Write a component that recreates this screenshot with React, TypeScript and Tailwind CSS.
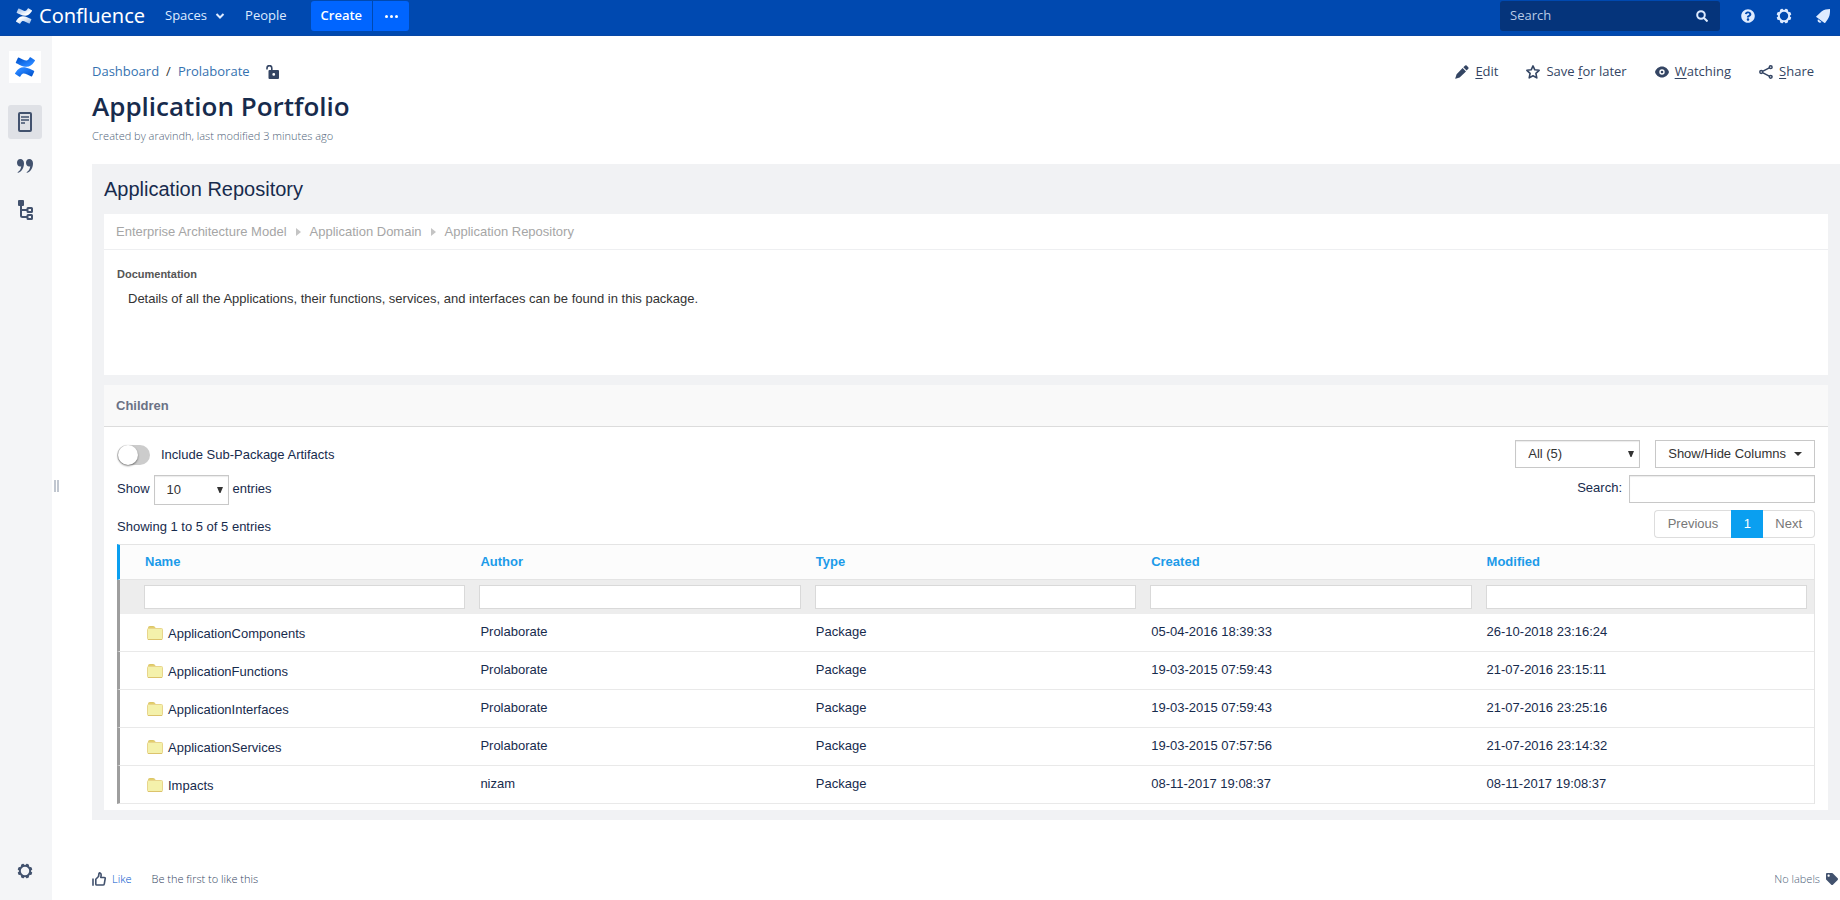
import React, { useState } from "react";
import { FaQuestionCircle, FaTag } from "react-icons/fa";

const UI = "font-['Open_Sans',sans-serif]";

const columns = ["Name", "Author", "Type", "Created", "Modified"];

const packages = [
  { name: "ApplicationComponents", author: "Prolaborate", type: "Package", created: "05-04-2016 18:39:33", modified: "26-10-2018 23:16:24" },
  { name: "ApplicationFunctions", author: "Prolaborate", type: "Package", created: "19-03-2015 07:59:43", modified: "21-07-2016 23:15:11" },
  { name: "ApplicationInterfaces", author: "Prolaborate", type: "Package", created: "19-03-2015 07:59:43", modified: "21-07-2016 23:25:16" },
  { name: "ApplicationServices", author: "Prolaborate", type: "Package", created: "19-03-2015 07:57:56", modified: "21-07-2016 23:14:32" },
  { name: "Impacts", author: "nizam", type: "Package", created: "08-11-2017 19:08:37", modified: "08-11-2017 19:08:37" },
];

function ConfluenceMark({ id, from, to, className }: { id: string; from: string; to: string; className: string }) {
  return (
    <svg viewBox="0 0 24 24" className={className} aria-hidden="true">
      <defs>
        <linearGradient id={id + "-a"} x1="1" y1="1" x2="0.2" y2="0.2">
          <stop offset="0.1" stopColor={from} />
          <stop offset="0.9" stopColor={to} />
        </linearGradient>
        <linearGradient id={id + "-b"} x1="0" y1="0" x2="0.8" y2="0.8">
          <stop offset="0.1" stopColor={from} />
          <stop offset="0.9" stopColor={to} />
        </linearGradient>
      </defs>
      <path
        fill={`url(#${id}-a)`}
        d="M.87 18.257c-.248.382-.53.875-.763 1.245a.764.764 0 0 0 .255 1.04l4.965 3.054a.764.764 0 0 0 1.058-.26c.199-.332.454-.763.733-1.221 1.967-3.247 3.945-2.853 7.508-1.146l4.957 2.337a.764.764 0 0 0 1.028-.382l2.364-5.346a.764.764 0 0 0-.382-1 599.851 599.851 0 0 1-4.965-2.361C10.911 10.97 5.224 11.185.87 18.257z"
      />
      <path
        fill={`url(#${id}-b)`}
        d="M23.131 5.743c.249-.405.531-.875.764-1.25a.764.764 0 0 0-.256-1.034L18.675.404a.764.764 0 0 0-1.058.26c-.195.335-.451.763-.734 1.225-1.966 3.246-3.945 2.85-7.508 1.146L4.437.694a.764.764 0 0 0-1.027.382L1.046 6.422a.764.764 0 0 0 .382 1c1.039.49 3.105 1.467 4.965 2.361 6.698 3.246 12.392 3.029 16.738-4.04z"
      />
    </svg>
  );
}

function Cog({ className }: { className: string }) {
  return (
    <svg viewBox="0 0 16 16" className={className} fill="currentColor" aria-hidden="true">
      <circle cx="8" cy="8" r="5.2" fill="none" stroke="currentColor" strokeWidth="2" />
      {[22.5, 67.5, 112.5, 157.5, 202.5, 247.5, 292.5, 337.5].map((a) => (
        <rect key={a} x="6.4" y="0.6" width="3.2" height="2.6" rx="0.8" transform={`rotate(${a} 8 8)`} />
      ))}
    </svg>
  );
}

function Bell() {
  return (
    <svg viewBox="0 0 14 14" className="size-3.5" fill="currentColor" aria-hidden="true">
      <path d="M.2 7.400L5.500 2.600C8 .600 11 .100 14 0c.1 3.500-.1 7-2.100 10L9.300 13.800c-.2.300-.6.300-.8.100L.3 8.100c-.2-.2-.3-.5-.1-.7z" />
      <path d="M2 10.200l3.600 2.700c-.9 1-2.300 1-3.200.2-.8-.7-1-1.900-.4-2.900z" />
    </svg>
  );
}

function PageIcon() {
  return (
    <svg viewBox="0 0 14 20" className="h-5 w-3.5" fill="none" stroke="currentColor" aria-hidden="true">
      <rect x="1" y="1" width="12" height="18" rx="1" strokeWidth="2" />
      <path d="M3 5h8M3 8h8M3 11h4" strokeWidth="1.500" />
    </svg>
  );
}

function QuotesIcon() {
  return (
    <svg viewBox="0 0 16 14" className="h-3.5 w-4" fill="currentColor" aria-hidden="true">
      <path d="M3.300 0C5.500 0 7 1.600 7 4.300c0 4.500-2.300 8.400-5.800 9.500-.6.200-.8-.5-.3-.8C2.800 11.800 4 9.700 4.200 7.200 2 8 0 6.200 0 3.700 0 1.600 1.400 0 3.300 0z" />
      <path transform="translate(9 0)" d="M3.300 0C5.500 0 7 1.600 7 4.300c0 4.500-2.300 8.400-5.800 9.500-.6.200-.8-.5-.3-.8C2.800 11.800 4 9.700 4.200 7.200 2 8 0 6.200 0 3.700 0 1.600 1.400 0 3.300 0z" />
    </svg>
  );
}

function TreeIcon() {
  return (
    <svg viewBox="0 0 16 20" className="h-5 w-4" fill="none" stroke="currentColor" strokeWidth="2" aria-hidden="true">
      <rect x="1" y="0" width="6" height="6" rx="1" fill="currentColor" stroke="none" />
      <path d="M4 5v10.500q0 1.500 1.500 1.500H10M4 10h6" />
      <rect x="10.500" y="8" width="4.500" height="4" rx="0.500" />
      <rect x="10.500" y="15" width="4.500" height="4" rx="0.500" />
    </svg>
  );
}

function UnlockIcon() {
  return (
    <svg viewBox="0 0 14 14" className="size-3.5" aria-hidden="true">
      <path d="M1 4.500V3a2.300 2.300 0 0 1 4.800 0v3" fill="none" stroke="currentColor" strokeWidth="1.600" />
      <path fillRule="evenodd" fill="currentColor" d="M3.500 5h8.500a1 1 0 0 1 1 1v7a1 1 0 0 1-1 1H3.500a1 1 0 0 1-1-1V6a1 1 0 0 1 1-1zM7.750 8a1.400 1.400 0 1 0 0 2.800 1.400 1.400 0 0 0 0-2.800z" />
    </svg>
  );
}

function PencilIcon() {
  return (
    <svg viewBox="0 0 14 14" className="size-3.5" fill="currentColor" aria-hidden="true">
      <path d="M8.300 2.300L10.200.600q.7-.6 1.400 0l1.700 1.700q.6.700 0 1.400l-1.700 1.900z" />
      <path d="M7.600 3l3.400 3.400-6.400 6L.6 13.700q-.5.1-.3-.4L1.600 9.200z" />
    </svg>
  );
}

function EyeIcon() {
  return (
    <svg viewBox="0 0 14 14" className="size-3.5" aria-hidden="true">
      <path fill="currentColor" fillRule="evenodd" d="M7 1.500c3.400 0 6 2.400 7 5.500-1 3.100-3.600 5.500-7 5.500S1 10.100 0 7c1-3.100 3.600-5.500 7-5.500zM7 4.300a2.700 2.700 0 1 0 0 5.400 2.700 2.700 0 0 0 0-5.400z" />
      <circle cx="7" cy="7" r="1.300" fill="currentColor" />
    </svg>
  );
}

function StarIcon() {
  return (
    <svg viewBox="0 0 14 14" className="size-3.5" fill="none" stroke="currentColor" strokeWidth="1.600" strokeLinejoin="round" aria-hidden="true">
      <path d="M7 .900l1.800 3.900 4.300.500-3.200 3 .900 4.600L7 10.800l-3.800 2.100.900-4.600-3.200-3 4.300-.500z" />
    </svg>
  );
}

function ShareIcon() {
  return (
    <svg viewBox="0 0 14 14" className="size-3.5" fill="none" stroke="currentColor" strokeWidth="1.500" aria-hidden="true">
      <path d="M3.500 6.400l6.800-3.600M3.500 7.600l6.800 3.600" />
      <circle cx="2.200" cy="7" r="1.400" />
      <circle cx="11.700" cy="2.200" r="1.400" />
      <circle cx="11.700" cy="11.800" r="1.400" />
    </svg>
  );
}

function ThumbIcon() {
  return (
    <svg viewBox="0 0 14 14" className="size-3.5" fill="none" stroke="currentColor" strokeWidth="1.600" strokeLinejoin="round" aria-hidden="true">
      <path d="M1 6.500v7.300" />
      <path d="M3.800 12.200V7.200L6.500 4.500 7 1.500q.2-.8 1-.6 1.200.4 1.200 2L8.800 5.500h3.400q1.200 0 1 1.200l-.9 5.100q-.2 1.200-1.400 1.200H4.800q-1 0-1-.8z" />
    </svg>
  );
}

function FolderIcon() {
  return (
    <svg viewBox="0 0 16 14" className="h-3.5 w-4 shrink-0" aria-hidden="true">
      <path d="M1.500 4V1.500q0-1 1-1h4q1 0 1.300 1L8.500 3z" fill="#e3cf6b" stroke="#dcc569" />
      <rect x="0.500" y="2.500" width="15" height="11" rx="1" fill="#f4f1ab" stroke="#e8d58c" />
      <path d="M1 13.500h14" stroke="#dcc36c" />
    </svg>
  );
}

function Crumb() {
  return (
    <svg viewBox="0 0 5 8" className="h-2 w-[5px]" fill="#c4c4c4" aria-hidden="true">
      <path d="M0 0l5 4-5 4z" />
    </svg>
  );
}

function Triangle({ className }: { className: string }) {
  return (
    <svg viewBox="0 0 6 6" className={className} fill="#333" aria-hidden="true">
      <path d="M0 0h6L3.500 6h-1z" />
    </svg>
  );
}

function Letter({ text, at }: { text: string; at: number }) {
  return (
    <span>
      {text.slice(0, at)}
      <span className="underline underline-offset-2">{text[at]}</span>
      {text.slice(at + 1)}
    </span>
  );
}

function TopBar() {
  return (
    <header className={`${UI} flex h-9 items-start border-b border-[#0747a6] bg-[#0049b0] pr-2.5 pl-4 text-[13px] text-[#deebff]`}>
      <div className="flex h-8 flex-1 items-center">
        <a href="#" className="flex h-8 items-center gap-[7px] text-white">
          <ConfluenceMark id="bar" from="#9fbfea" to="#ffffff" className="size-4" />
          <span className="font-['Noto_Sans',sans-serif] text-[20px] leading-8">Confluence</span>
        </a>
        <button className="ml-5 flex items-center gap-2">
          Spaces
          <svg viewBox="0 0 10 6" className="h-1.5 w-2.5" fill="none" stroke="currentColor" strokeWidth="2" aria-hidden="true">
            <path d="M1.500 1L5 4.500 8.500 1" />
          </svg>
        </button>
        <button className="ml-5">People</button>
        <div className="ml-6 flex h-[30px] gap-px self-center text-white">
          <button className="rounded-l-[3px] bg-[#0065ff] px-2.5 text-[13px] font-semibold">Create</button>
          <button aria-label="More" className="flex w-9 items-center justify-center gap-0.5 rounded-r-[3px] bg-[#0065ff]">
            <span className="size-[3px] rounded-full bg-white" />
            <span className="size-[3px] rounded-full bg-white" />
            <span className="size-[3px] rounded-full bg-white" />
          </button>
        </div>
      </div>
      <div className="flex h-8 items-center">
        <label className="flex h-[30px] w-55 items-center rounded-[3px] bg-[#05347b] pr-3 pl-2.5">
          <input aria-label="Search" placeholder="Search" className="min-w-0 flex-1 bg-transparent outline-none placeholder:text-[#b8cbe6]" />
          <svg viewBox="0 0 12 12" className="size-3" fill="none" stroke="currentColor" strokeWidth="2" aria-hidden="true">
            <circle cx="5" cy="5" r="3.800" />
            <path d="M8 8l3.500 3.500" />
          </svg>
        </label>
        <button aria-label="Help" className="ml-[21px]"><FaQuestionCircle className="size-3.5" /></button>
        <button aria-label="Settings" className="ml-[21px]"><Cog className="size-4" /></button>
        <button aria-label="Notifications" className="ml-6"><Bell /></button>
      </div>
    </header>
  );
}

function SideBar() {
  return (
    <aside className="flex w-13 shrink-0 flex-col items-center bg-[#f4f5f7] pr-0.5 text-[#42526e]">
      <a href="#" aria-label="Space home" className="mt-[15px] flex size-8 items-center justify-center bg-white">
        <ConfluenceMark id="space" from="#0052cc" to="#2684ff" className="size-5" />
      </a>
      <nav className="mt-[22px] flex flex-col gap-2.5">
        <a href="#" aria-label="Pages" className="flex size-[34px] items-center justify-center rounded-[3px] bg-[#dfe1e6]"><PageIcon /></a>
        <a href="#" aria-label="Blog" className="flex size-[34px] items-center justify-center"><QuotesIcon /></a>
        <a href="#" aria-label="Page tree" className="flex size-[34px] items-center justify-center"><TreeIcon /></a>
      </nav>
      <button aria-label="Configure sidebar" className="mt-auto mb-[21px]"><Cog className="size-4" /></button>
    </aside>
  );
}

function PageHeader() {
  const action = "flex items-center gap-1.5";
  return (
    <div className={UI}>
      <div className="flex h-6 items-center justify-between pr-[26px] text-[13px]">
        <nav className="flex items-center text-[#3572b0]">
          <a href="#">Dashboard</a>
          <span className="px-[7px] text-[#333]">/</span>
          <a href="#">Prolaborate</a>
          <button aria-label="Restrictions" className="ml-4 text-[#344563]"><UnlockIcon /></button>
        </nav>
        <div className="flex items-center gap-7 text-[#344563]">
          <button className={action}><PencilIcon /><Letter text="Edit" at={0} /></button>
          <button className={action}><StarIcon /><Letter text="Save for later" at={5} /></button>
          <button className={action}><EyeIcon /><Letter text="Watching" at={0} /></button>
          <button className={action}><ShareIcon /><Letter text="Share" at={0} /></button>
        </div>
      </div>
      <h1 className="mt-1 text-[26px] leading-9 font-semibold text-[#172b4d]">Application Portfolio</h1>
      <p className="mt-0.5 text-[11px] leading-5 font-light text-[#505f79]">Created by aravindh, last modified 3 minutes ago</p>
    </div>
  );
}

function Summary() {
  return (
    <section className="h-[161px] bg-white">
      <nav className="flex h-9 items-center gap-[9px] border-b border-[#eeeff1] px-3 text-[#a6a6a6]">
        <a href="#">Enterprise Architecture Model</a>
        <Crumb />
        <a href="#">Application Domain</a>
        <Crumb />
        <a href="#">Application Repository</a>
      </nav>
      <h3 className="mt-4 px-[13px] text-[11px] leading-4 font-bold text-[#555]">Documentation</h3>
      <p className="mt-[7px] px-6 leading-5 text-[#333]">
        Details of all the Applications, their functions, services, and interfaces can be found in this package.
      </p>
    </section>
  );
}

function Controls() {
  const [sub, setSub] = useState(false);
  const field = "border border-[#c8c8c8] bg-white shadow-[inset_0_1px_1px_rgba(0,0,0,0.08)]";
  const select = `${field} h-full w-full appearance-none px-3 text-[#333]`;
  return (
    <div className="flex justify-between">
      <div className="flex flex-col">
        <label className="flex h-[29px] items-center gap-[11px]">
          <input
            type="checkbox"
            checked={sub}
            onChange={() => setSub(!sub)}
            className="flex h-5 w-[33px] appearance-none items-center rounded-full bg-[#ccc] px-px before:size-5 before:rounded-full before:bg-white before:shadow-[0_1px_2px_rgba(0,0,0,0.5)] checked:justify-end checked:bg-[#0a9ff0]"
          />
          Include Sub-Package Artifacts
        </label>
        <label className="mt-1.5 flex h-[30px] gap-1">
          <span className="leading-[27px]">Show</span>
          <span className="relative block w-[75px]">
            <select defaultValue="10" className={select}>
              <option>10</option>
              <option>25</option>
              <option>50</option>
            </select>
            <Triangle className="pointer-events-none absolute top-3 right-1.5 size-1.5" />
          </span>
          <span className="leading-[27px]">entries</span>
        </label>
        <p className="mt-3 leading-5">Showing 1 to 5 of 5 entries</p>
      </div>
      <div className="flex flex-col items-end gap-[7px]">
        <div className="flex gap-[15px]">
          <span className="relative block h-7 w-[125px]">
            <select aria-label="Filter by type" className={select}>
              <option>All (5)</option>
              <option>Package (5)</option>
            </select>
            <Triangle className="pointer-events-none absolute top-[11px] right-1.5 size-1.5" />
          </span>
          <button className="flex h-7 items-center gap-2 border border-[#c8c8c8] bg-white px-3 text-[#333]">
            Show/Hide Columns
            <svg viewBox="0 0 8 4" className="h-1 w-2" fill="#333" aria-hidden="true"><path d="M0 0h8L4 4z" /></svg>
          </button>
        </div>
        <label className="flex h-7 gap-[7px]">
          <span className="leading-[26px]">Search:</span>
          <input className={`${field} w-[186px] px-2`} />
        </label>
        <div className="flex h-7 text-[#777]">
          <button className="rounded-l-[4px] border border-r-0 border-[#ddd] px-[13px]">Previous</button>
          <button className="w-8 bg-[#0a9ff0] text-white">1</button>
          <button className="rounded-r-[4px] border border-l-0 border-[#ddd] px-3">Next</button>
        </div>
      </div>
    </div>
  );
}

function PackageTable() {
  const cell = "px-2 py-0";
  const value = "px-2 pt-0 pb-0.5";
  return (
    <table className="mt-1.5 w-full table-fixed border-separate border-spacing-0 border-r border-[#e4e4e4]">
      <colgroup>
        <col className="w-5" />
        {columns.map((c) => <col key={c} />)}
      </colgroup>
      <thead>
        <tr className="h-9 bg-[#fcfcfc] text-left text-[#1c9be9]">
          <td className="border-y border-l-3 border-y-[#e4e4e4] border-l-[#0a9ff0]" />
          {columns.map((c) => (
            <th key={c} className={`${cell} border-y border-[#e4e4e4] font-bold`}>{c}</th>
          ))}
        </tr>
        <tr className="h-[34px] bg-[#ededed]">
          <td className="border-l-3 border-l-[#9e9e9e]" />
          {columns.map((c) => (
            <td key={c} className="px-[7px] py-0">
              <input aria-label={`Filter ${c}`} className="block h-6 w-full border border-[#d9d9d9] bg-white px-1" />
            </td>
          ))}
        </tr>
      </thead>
      <tbody>
        {packages.map((p) => (
          <tr key={p.name} className="h-[38px] [&>td]:border-b [&>td]:border-b-[#e9e9e9]">
            <td className="border-l-3 border-l-[#9e9e9e]" />
            <td className={cell}>
              <a href="#" className="flex items-center gap-[5px] pl-0.5">
                <FolderIcon />
                <span className="pt-0.5">{p.name}</span>
              </a>
            </td>
            <td className={value}>{p.author}</td>
            <td className={value}>{p.type}</td>
            <td className={value}>{p.created}</td>
            <td className={value}>{p.modified}</td>
          </tr>
        ))}
      </tbody>
    </table>
  );
}

export default function App() {
  return (
    <div className="flex min-h-screen flex-col bg-white">
      <TopBar />
      <div className="flex flex-1">
        <SideBar />
        <div className="flex w-10 shrink-0 items-center gap-px pt-9 pl-0.5" aria-hidden="true">
          <span className="h-3 w-0.5 bg-[#c1c7d0]" />
          <span className="h-3 w-0.5 bg-[#c1c7d0]" />
        </div>
        <main className="flex min-w-0 flex-1 flex-col pt-6">
          <PageHeader />
          <div className="mt-[18px] bg-[#f1f2f4] px-3 pb-2.5 font-['Liberation_Sans',Arial,sans-serif] text-[13px] text-[#172b4d]">
            <h2 className="py-2.5 text-[20px] leading-[30px]">Application Repository</h2>
            <Summary />
            <section className="mt-2.5 bg-white">
              <h3 className="flex h-[42px] items-center border-b border-[#dcdcdc] bg-[#f9f9f9] px-3 font-bold text-[#6b7285]">Children</h3>
              <div className="px-[13px] pt-[13px] pb-1.5">
                <Controls />
                <PackageTable />
              </div>
            </section>
          </div>
          <footer className={`${UI} mt-auto mb-[11px] flex h-5 items-center justify-between text-[11px] font-light text-[#344563]`}>
            <div className="flex items-center">
              <button className="flex items-center gap-1.5 text-[#0052cc]">
                <span className="text-[#42526e]"><ThumbIcon /></span>
                Like
              </button>
              <span className="ml-5">Be the first to like this</span>
            </div>
            <button className="flex items-center gap-1.5 pr-0.5 text-[#505f79]">
              No labels
              <FaTag className="size-3 text-[#42526e]" />
            </button>
          </footer>
        </main>
      </div>
    </div>
  );
}
